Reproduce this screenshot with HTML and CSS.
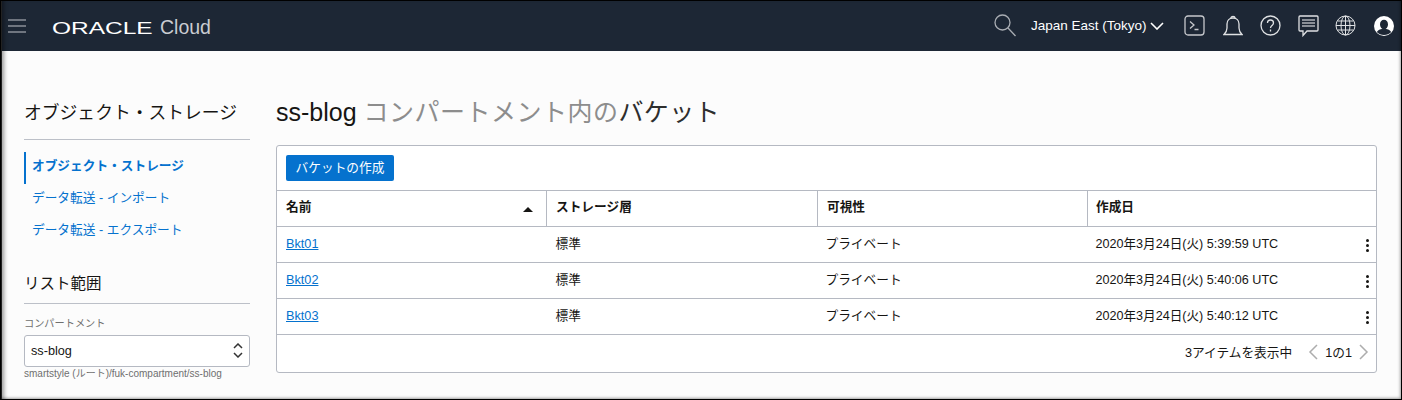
FILE: index.html
```html
<!DOCTYPE html>
<html lang="en">
<head>
    <meta charset="UTF-8">
    <title>Object Storage</title>
    <link rel="stylesheet" href="styles.css">
</head>
<body>
    <div class="frame"></div>

    <header class="topbar">
        <svg class="menu-icon" width="18" height="14" viewBox="0 0 18 14"><path d="M0 1h18M0 7h18M0 13h18"/></svg>
        <div class="brand"><span class="brand-oracle">ORACLE</span><span class="brand-cloud">Cloud</span></div>

        <svg class="icon search" width="22" height="23" viewBox="0 0 22 23"><circle cx="8.5" cy="8.5" r="7.5"/><path d="M14 14l7.5 8"/></svg>
        <div class="region">Japan East (Tokyo)</div>
        <svg class="icon chevron" width="14" height="8" viewBox="0 0 14 8"><path d="M1 1l6 6 6-6"/></svg>

        <svg class="icon terminal" width="21" height="21" viewBox="0 0 21 21"><rect x="1" y="1" width="19" height="19" rx="3"/><path d="M6 6.5l4 3.500-4 3.500M10.500 14.500h4"/></svg>
        <svg class="icon bell" width="20" height="22" viewBox="0 0 20 22"><path d="M1 19.500c2-2 3-3.500 3-6.500v-4c0-3.500 2.500-6 6-6s6 2.500 6 6v4c0 3 1 4.500 3 6.500z"/><path d="M8 3c0-2 4-2 4 0"/></svg>
        <svg class="icon help" width="21" height="21" viewBox="0 0 21 21"><circle cx="10.500" cy="10.500" r="9.500"/><path d="M7.500 8c0-4 6-4 6 0 0 2.500-3 2.500-3 5"/><path d="M10.500 14.500v2"/></svg>
        <svg class="icon chat" width="21" height="22" viewBox="0 0 21 22"><path d="M2 1h17a1 1 0 0 1 1 1v13a1 1 0 0 1-1 1H9l-4 4.500V16H2a1 1 0 0 1-1-1V2a1 1 0 0 1 1-1z"/><path d="M4 5h13M4 8h13M4 11h13" class="thin"/></svg>
        <svg class="icon globe" width="21" height="21" viewBox="0 0 21 21"><circle cx="10.500" cy="10.500" r="9.500"/><ellipse cx="10.500" cy="10.500" rx="4.500" ry="9.500"/><path d="M10.500 1v19M1 10.500h19M2.500 6h16M2.500 15h16"/></svg>
        <svg class="user" width="20" height="20" viewBox="0 0 20 20"><circle cx="10" cy="10" r="10" fill="#fff"/><ellipse cx="10" cy="8.500" rx="4" ry="4.800" fill="#1d2735"/><path d="M2.800 16c1.500-2.500 4-3 7.200-3s5.700.5 7.200 3c-1.800 2-4.300 3-7.200 3s-5.400-1-7.200-3z" fill="#1d2735"/></svg>
    </header>

    <div class="page">
        <aside class="sidebar">
            <h2 class="side-title">オブジェクト・ストレージ</h2>
            <ul class="side-nav">
                <li class="active"><a href="#">オブジェクト・ストレージ</a></li>
                <li><a href="#">データ転送 - インポート</a></li>
                <li><a href="#">データ転送 - エクスポート</a></li>
            </ul>
            <h2 class="side-title scope-title">リスト範囲</h2>
            <div class="field-label">コンパートメント</div>
            <div class="select">
                <span>ss-blog</span>
                <svg width="10" height="15" viewBox="0 0 10 15"><path d="M1 5l4-4 4 4M1 10l4 4 4-4"/></svg>
            </div>
            <div class="field-help">smartstyle (ルート)/fuk-compartment/ss-blog</div>
        </aside>

        <main class="content">
            <h1 class="page-title">ss-blog <span class="muted">コンパートメント内の</span><span class="title-end">バケット</span></h1>
            <div class="card">
                <div class="toolbar"><button class="primary">バケットの作成</button></div>
                <table class="buckets">
                    <thead>
                        <tr>
                            <th class="col-name">名前<span class="sort"></span></th>
                            <th class="col-tier">ストレージ層</th>
                            <th class="col-vis">可視性</th>
                            <th>作成日</th>
                        </tr>
                    </thead>
                    <tbody>
                        <tr>
                            <td><a href="#">Bkt01</a></td>
                            <td>標準</td>
                            <td>プライベート</td>
                            <td class="created">2020年3月24日(火) 5:39:59 UTC<span class="kebab"><i></i><i></i><i></i></span></td>
                        </tr>
                        <tr>
                            <td><a href="#">Bkt02</a></td>
                            <td>標準</td>
                            <td>プライベート</td>
                            <td class="created">2020年3月24日(火) 5:40:06 UTC<span class="kebab"><i></i><i></i><i></i></span></td>
                        </tr>
                        <tr>
                            <td><a href="#">Bkt03</a></td>
                            <td>標準</td>
                            <td>プライベート</td>
                            <td class="created">2020年3月24日(火) 5:40:12 UTC<span class="kebab"><i></i><i></i><i></i></span></td>
                        </tr>
                    </tbody>
                </table>
                <div class="pager">
                    <span class="count">3アイテムを表示中</span>
                    <svg width="10" height="16" viewBox="0 0 10 16"><path d="M9 1L2 8l7 7"/></svg>
                    <span class="pages">1の1</span>
                    <svg width="10" height="16" viewBox="0 0 10 16"><path d="M1 1l7 7-7 7"/></svg>
                </div>
            </div>
        </main>
    </div>
</body>
</html>
```

FILE: styles.css
```css
body {
    margin: 0;
    height: 400px;
    overflow: hidden;
    background-color: #fcfcfc;
    color: #161513;
    font-family: "Liberation Sans", "Noto Sans CJK JP", sans-serif;
    font-size: 12.700px;
}

a {
    color: #0572ce;
}

/* screenshot border and window shadow */
.frame {
    position: absolute;
    top: 0;
    left: 0;
    width: 1402px;
    height: 400px;
    z-index: 5;
    pointer-events: none;
    box-shadow: inset 0 0 0 1px #000, inset 2px 0 0 #222, inset 6px 0 4px -2px rgba(0, 0, 0, 0.4), inset -3px -3px 3px -1px rgba(0, 0, 0, 0.35);
}

.topbar {
    display: flex;
    align-items: center;
    height: 51px;
    padding-left: 8px;
    box-sizing: border-box;
    background-color: #1d2735;
    color: #fff;
}

.menu-icon path {
    fill: none;
    stroke: #8b9098;
    stroke-width: 1.500;
}

.brand {
    display: flex;
    align-items: baseline;
    margin-left: 26px;
    width: 160px;
    padding-top: 3px;
}

.brand-oracle {
    width: 108px;
    font-size: 16px;
    transform: scaleX(1.530);
    transform-origin: left center;
}

.brand-cloud {
    font-size: 19.500px;
    color: #c9ccd1;
}

.icon {
    fill: none;
    stroke: #dfe1e3;
    stroke-width: 1.300;
}

.search {
    margin-left: 782px;
    stroke: #a9adb3;
}

.region {
    margin-left: 15px;
    font-size: 13.500px;
}

.chevron {
    margin-left: 3px;
    stroke: #fff;
    stroke-width: 1.600;
}

.terminal {
    margin-left: 20px;
    stroke: #c6c8cc;
}

.bell {
    margin-left: 18px;
}

.help {
    margin-left: 17px;
}

.chat {
    margin-left: 17px;
}

.chat .thin {
    stroke: #aeb2b8;
}

.globe {
    margin-left: 16px;
    stroke-width: 1;
}

.user {
    margin-left: 18px;
}

.page {
    display: flex;
    padding: 0 25px 0 24px;
}

.sidebar {
    width: 227px;
    margin-right: 26px;
}

.side-title {
    margin: 50px 0 0;
    padding-bottom: 14px;
    border-bottom: 1px solid #bcc0c8;
    font-size: 17.800px;
    font-weight: 400;
    line-height: 24px;
}

.scope-title {
    margin-top: 25.500px;
    font-size: 15.500px;
    line-height: 22px;
    padding-bottom: 8px;
}

.side-nav {
    list-style: none;
    margin: 12px 0 0;
    padding: 0;
}

.side-nav li {
    height: 31.500px;
    line-height: 29px;
    padding-left: 8px;
}

.side-nav a {
    text-decoration: none;
}

.side-nav .active {
    height: 32px;
    border-left: 2px solid #0572ce;
    padding-left: 6px;
}

.side-nav .active a {
    font-weight: 700;
}

.field-label {
    margin-top: 13px;
    font-size: 10.200px;
    line-height: 14px;
    color: #6f6f6f;
}

.select {
    display: flex;
    align-items: center;
    justify-content: space-between;
    box-sizing: border-box;
    width: 226px;
    height: 32px;
    margin-top: 4px;
    padding: 0 6px;
    border: 1px solid #b5b9c2;
    border-radius: 3px;
    background-color: #fff;
}

.select svg path {
    fill: none;
    stroke: #333;
    stroke-width: 1.500;
}

.field-help {
    font-size: 10px;
    line-height: 13px;
    color: #6f6f6f;
}

.content {
    width: 1101px;
}

.page-title {
    margin: 44px 0 0;
    font-size: 25px;
    font-weight: 400;
    line-height: 34px;
}

.muted {
    color: #8d8d8d;
    letter-spacing: 0.500px;
}

.title-end {
    color: #2e2e2e;
    letter-spacing: 0.300px;
}

.card {
    box-sizing: border-box;
    width: 1101px;
    height: 228px;
    margin-top: 16px;
    border: 1px solid #b5b9c2;
    border-radius: 3px;
    background-color: #fff;
}

.toolbar {
    box-sizing: border-box;
    height: 44px;
    padding: 9px 9px 0;
}

.primary {
    display: block;
    width: 108px;
    height: 26px;
    padding: 0 0 4px;
    border: none;
    border-radius: 2px;
    background-color: #0572ce;
    color: #fff;
    font: inherit;
}

.buckets {
    width: 1099px;
    table-layout: fixed;
    border-collapse: collapse;
}

.buckets th,
.buckets td {
    height: 33px;
    padding: 0 9px 2px;
    border-top: 1px solid #b5b9c2;
    text-align: left;
}

.buckets td:not(:first-child) {
    height: 31px;
    padding-bottom: 4px;
}

.buckets th {
    position: relative;
    height: 29px;
    padding-bottom: 6px;
    border-left: 1px solid #b5b9c2;
    font-weight: 700;
}

.buckets th:first-child {
    border-left: none;
}

.buckets th:last-child,
.buckets td:nth-child(3),
.buckets td:last-child {
    padding-left: 8px;
}

.col-name {
    width: 251px;
}

.col-tier {
    width: 252px;
}

.col-vis {
    width: 251px;
}

.sort {
    position: absolute;
    right: 13px;
    top: 16px;
    border-left: 5px solid transparent;
    border-right: 5px solid transparent;
    border-bottom: 5px solid #161513;
}

.created {
    position: relative;
    font-size: 12.600px;
}

/* row action menu */
.kebab {
    position: absolute;
    right: 7px;
    top: 12px;
    display: flex;
    flex-direction: column;
    gap: 2px;
}

.kebab i {
    width: 3px;
    height: 3px;
    border-radius: 50%;
    background-color: #161513;
}

.pager {
    display: flex;
    align-items: center;
    justify-content: flex-end;
    box-sizing: border-box;
    height: 37px;
    padding: 0 7px 3px 0;
    border-top: 1px solid #b5b9c2;
}

.count {
    margin-right: 16px;
}

.pages {
    margin: 0 7px;
}

.pager svg path {
    fill: none;
    stroke: #adadad;
    stroke-width: 1.500;
}
```
